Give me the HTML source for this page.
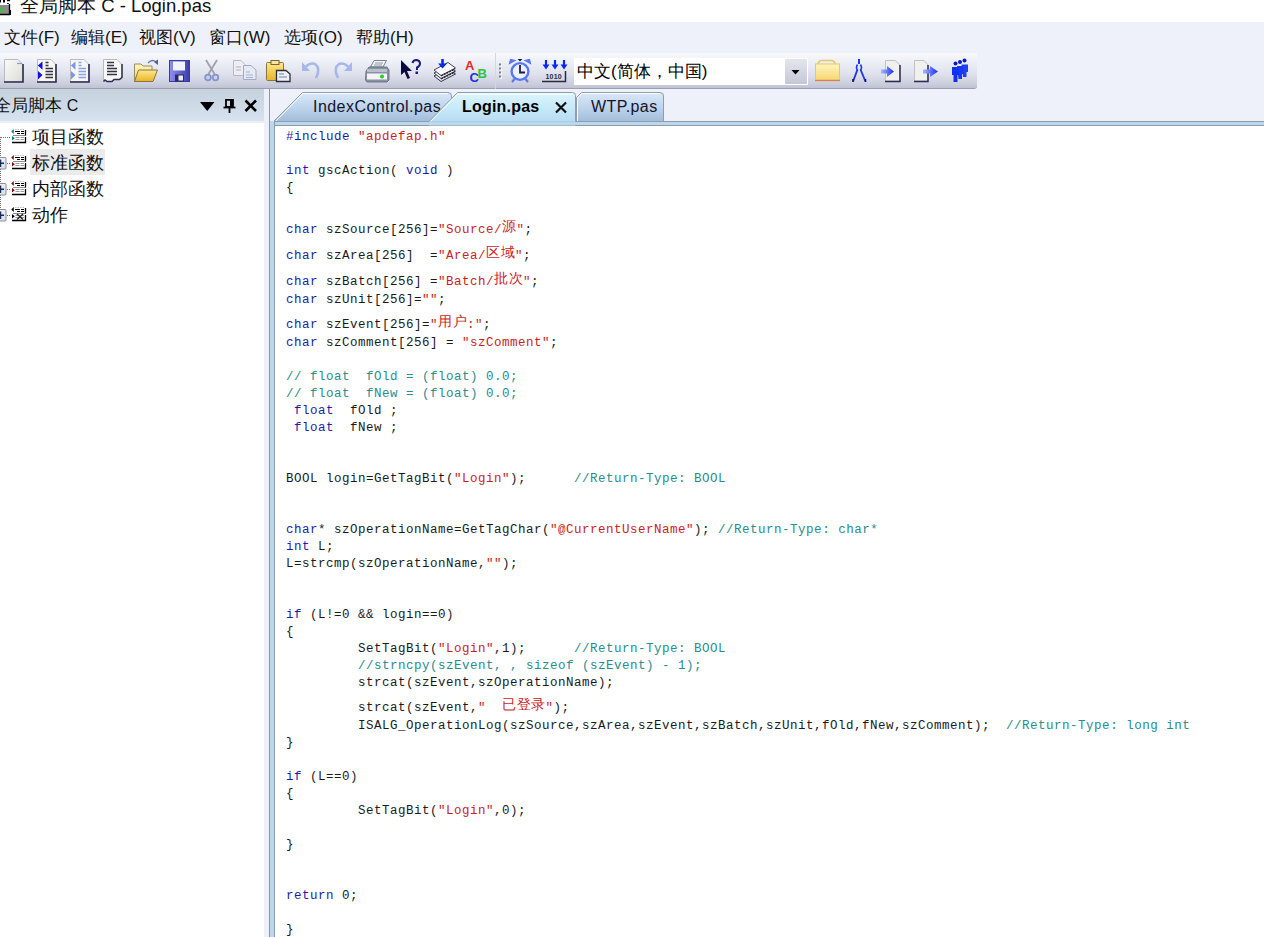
<!DOCTYPE html>
<html><head><meta charset="utf-8">
<style>
*{margin:0;padding:0;box-sizing:border-box}
html,body{width:1264px;height:937px;overflow:hidden;background:#fff;font-family:"Liberation Sans",sans-serif;position:relative}
.abs{position:absolute}
#title{left:0;top:0;width:1264px;height:22px;background:#fff}
#titletxt{left:20px;top:-4px;font-size:18.5px;color:#101010;white-space:pre;line-height:20px}
#menubar{left:0;top:22px;width:1264px;height:67px;background:#eef1f9}
.mi{position:absolute;top:28px;font-size:17px;line-height:20px;color:#111;white-space:pre}
#tb1{left:0;top:53px;width:495px;height:36px;background:linear-gradient(#f8f9fd 0%,#eef0f7 25%,#dfe1ec 60%,#cbcedd 88%,#bfc2d3 100%);border-bottom:1px solid #9c9fb0}
#tb2{left:495px;top:53px;width:482px;border-left:1px solid #d4d6e0;height:36px;background:linear-gradient(#f8f9fd 0%,#eef0f7 25%,#dfe1ec 60%,#cbcedd 88%,#bfc2d3 100%);border-bottom:1px solid #9c9fb0;border-radius:0 0 3px 0}
#hline{left:977px;top:89px;width:287px;height:1px;background:#9c9fb0}
#lefthdr{left:0;top:89px;width:265px;height:32px;background:linear-gradient(#c4d2de,#d7e3ee)}
#lefthdrline{left:0;top:121px;width:265px;height:2px;background:#eaeff6}
#tree{left:0;top:123px;width:264px;height:814px;background:#fff}
#split{left:264px;top:89px;width:5px;height:848px;background:#eef0f9}
#tabstrip{left:269px;top:89px;width:995px;height:33px;background:#eef0fa}
#vline{left:269px;top:89px;width:1px;height:848px;background:#8c96a0}
#band{left:270px;top:121px;width:994px;height:5px;background:#b9d7ee;border-top:1px solid #8e9ba6;border-bottom:1px solid #8e9ba6}
#bandl{left:270px;top:121px;width:5px;height:816px;background:#b9d7ee;border-right:1px solid #8e9ba6}
#code{left:275px;top:126px;width:989px;height:811px;background:#fff}
.ln{position:absolute;font-family:"Liberation Mono",monospace;font-size:12.5px;letter-spacing:0.5px;line-height:17px;white-space:pre;color:#1a1a1a}
.ln i{font-style:normal}
.k{color:#1c1ca0}
.s{color:#cc1c1c}
.c{color:#2a8c8c}
.z{font-weight:normal;font-size:13.5px;letter-spacing:0.5px;font-family:"Liberation Sans",sans-serif;position:relative;top:-2px}
.tabtxt{position:absolute;font-size:16px;line-height:20px;white-space:pre;color:#141428}
.tree{position:absolute;font-size:18px;line-height:20px;white-space:pre;color:#111}
</style></head><body>
<div id="title" class="abs"></div>
<svg class="abs" style="left:0;top:0" width="14" height="18" viewBox="0 0 14 18"><rect x="0" y="4" width="9" height="1" fill="#fff"/><rect x="0" y="5" width="9" height="9" fill="#8c8c8c"/><circle cx="1" cy="10" r="2.2" fill="#40c040"/><path d="M9.5 4 V14.5 H0" fill="none" stroke="#000" stroke-width="1.3"/><rect x="9.5" y="10" width="1.5" height="5" fill="#000"/><rect x="0" y="0" width="1" height="2.5" fill="#000"/><rect x="3" y="0" width="2" height="2.5" fill="#000"/><rect x="7" y="0" width="3" height="1.2" fill="#000"/><rect x="7" y="3" width="2" height="1" fill="#333"/></svg>
<div id="titletxt" class="abs">全局脚本 C - Login.pas</div>
<div id="menubar" class="abs"></div>
<div class="mi" style="left:4px">文件(F)</div>
<div class="mi" style="left:71px">编辑(E)</div>
<div class="mi" style="left:139px">视图(V)</div>
<div class="mi" style="left:209px">窗口(W)</div>
<div class="mi" style="left:284px">选项(O)</div>
<div class="mi" style="left:356px">帮助(H)</div>
<div id="tb1" class="abs"></div>
<div id="tb2" class="abs"></div>
<div id="hline" class="abs"></div>
<svg class="abs" style="left:0;top:53px" width="980" height="36" viewBox="0 53 980 36">
<defs>
<linearGradient id="pg" x1="0" y1="0" x2="1" y2="1"><stop offset="0" stop-color="#fbfbfa"/><stop offset="1" stop-color="#dcdcd6"/></linearGradient>
<linearGradient id="fy" x1="0" y1="0" x2="0" y2="1"><stop offset="0" stop-color="#fbe98a"/><stop offset="1" stop-color="#e9b42a"/></linearGradient>
<linearGradient id="fl" x1="0" y1="0" x2="0" y2="1"><stop offset="0" stop-color="#fff4c0"/><stop offset="1" stop-color="#f5d870"/></linearGradient>
<linearGradient id="sv" x1="0" y1="0" x2="1" y2="0"><stop offset="0" stop-color="#9090f0"/><stop offset="1" stop-color="#3c3cb0"/></linearGradient>
<linearGradient id="ddg" x1="0" y1="0" x2="0" y2="1"><stop offset="0" stop-color="#e4e6ee"/><stop offset="1" stop-color="#c4c8d6"/></linearGradient>
<linearGradient id="ar" x1="0" y1="0" x2="1" y2="0"><stop offset="0" stop-color="#a8b8ff"/><stop offset="1" stop-color="#1830f0"/></linearGradient>
</defs>
<!-- 1 new -->
<path d="M4.5 59.5 H18 L23 64.5 V81.5 H4.5 Z" fill="url(#pg)" stroke="#b9b9c2" stroke-width="1"/>
<path d="M23 64 V82 H4" fill="none" stroke="#2c2c52" stroke-width="1.6"/>
<path d="M17 63.5 H22" stroke="#8a9ce0" stroke-width="1.2"/>
<!-- 2 doc arrows -->
<path d="M37.5 59.5 H51 L56 64.5 V81.5 H37.5 Z" fill="#f6f7f2" stroke="#b9b9c2" stroke-width="1"/>
<path d="M56 64 V82 H37" fill="none" stroke="#2c2c52" stroke-width="1.6"/>
<path d="M37.8 65.4 L42.5 61.6 V69.7 Z M38 71 V79.5 L42.5 75 Z" fill="#1010e0"/>
<path d="M45.5 62.6 H48.5 M45.5 65.6 H48.5 M45.5 68.6 H53 M45.5 71.6 H53 M45.5 74.6 H53 M45.5 77.6 H53" stroke="#33334a" stroke-width="1.5"/>
<!-- 3 doc arrows light -->
<path d="M70.5 59.5 H84 L89 64.5 V81.5 H70.5 Z" fill="#f6f7f2" stroke="#b9b9c2" stroke-width="1"/>
<path d="M89 64 V82 H70" fill="none" stroke="#2c2c52" stroke-width="1.6"/>
<path d="M70.8 65.4 L75.5 61.6 V69.7 Z M71 71 V79.5 L75.5 75 Z" fill="#7d95ec"/>
<path d="M78.5 62.6 H81.5 M78.5 65.6 H81.5 M78.5 68.6 H86 M78.5 71.6 H86 M78.5 74.6 H86 M78.5 77.6 H86" stroke="#8aa2e6" stroke-width="1.5"/>
<!-- 4 doc lines torn -->
<path d="M103.5 59.5 H117 L122 64.5 V77 L119 79.5 H114 L112 81.5 H107 L105 80 L103.5 81.5 Z" fill="#f8f8f6" stroke="#b9b9c2" stroke-width="1"/>
<path d="M122 64 V77.5 L119.5 79.5 H114 L112 81.5 H107 L105 80 L103.5 81.5" fill="none" stroke="#2c2c52" stroke-width="1.5"/>
<path d="M107 62.6 H114 M107 65.6 H114 M107 68.6 H117 M107 71.6 H117 M107 74.6 H117" stroke="#33334a" stroke-width="1.5"/>
<!-- 5 open folder -->
<path d="M134.5 81.5 V64 H141 L143 66 H152 V70" fill="url(#fl)" stroke="#9a8a60" stroke-width="1"/>
<path d="M134.5 81.5 L138.5 70 H157.5 L153 81.5 Z" fill="url(#fy)" stroke="#8a7440" stroke-width="1"/>
<path d="M148 63 Q152 58.5 156 62" fill="none" stroke="#6878a0" stroke-width="1.3"/>
<path d="M154 62 L158 59.5 V65 Z" fill="#506090"/>
<!-- 6 save -->
<rect x="169.5" y="60.5" width="20" height="21" fill="url(#sv)" stroke="#3a3aa0" stroke-width="1"/>
<rect x="173" y="61.5" width="12" height="9" fill="#f0f4ff"/>
<rect x="175" y="74.5" width="9" height="7" fill="#2a2a60"/>
<rect x="178.5" y="75.5" width="4.5" height="5" fill="#e8ecf8"/>
<!-- 7 scissors -->
<path d="M206 60 L214.5 74 M217 60 L208.5 74" stroke="#a0a0ac" stroke-width="1.8"/>
<circle cx="208" cy="77.5" r="2.8" fill="#c8d0ec" stroke="#8494cc" stroke-width="1.8"/>
<circle cx="215.5" cy="77.5" r="2.8" fill="#c8d0ec" stroke="#8494cc" stroke-width="1.8"/>
<!-- 8 copy -->
<path d="M233.5 60.5 H241 L245 64.5 V75.5 H233.5 Z" fill="#eeeef2" stroke="#b8b8c4" stroke-width="1"/>
<path d="M243.5 65.5 H251 L256 70 V79.5 H243.5 Z" fill="#e6eaf6" stroke="#a0a8c8" stroke-width="1"/>
<path d="M236 67 H241 M236 70 H241 M246 72 H250 M246 75 H253 M246 77.5 H253" stroke="#a8b0c8" stroke-width="1"/>
<!-- 9 paste -->
<rect x="266.5" y="62.5" width="17" height="18" rx="1" fill="url(#fy)" stroke="#8a7440" stroke-width="1"/>
<rect x="271" y="60.5" width="8" height="4" fill="#f6e6a0" stroke="#7a6430" stroke-width="1"/>
<path d="M276.5 70.5 H286 L290 74 V81.5 H276.5 Z" fill="#eef2f8" stroke="#2c2c40" stroke-width="1.3"/>
<path d="M279 74 H284 M279 77 H287" stroke="#7080a0" stroke-width="1"/>
<!-- 10 undo -->
<path d="M304 69 Q309 62 315 64 Q321 68 316 78" fill="none" stroke="#a6b8ea" stroke-width="2.6"/>
<path d="M302 62 V71 H310 Z" fill="#a6b8ea"/>
<!-- 11 redo -->
<path d="M350 69 Q345 62 339 64 Q333 68 338 78" fill="none" stroke="#a6b8ea" stroke-width="2.6"/>
<path d="M352 62 V71 H344 Z" fill="#a6b8ea"/>
<!-- 12 print -->
<path d="M370.5 67 L374 60.5 H386.5 L383 67 Z" fill="#f4f6f8" stroke="#7a8090" stroke-width="1"/>
<path d="M375 63 H383 M374 65 H382" stroke="#8088a0" stroke-width="0.9"/>
<path d="M366 71 L369 67 H387 L389 70 V80 L387 82 H367 L365.5 80 Z" fill="#8a92a6" stroke="#606878" stroke-width="0.8"/>
<rect x="367" y="69" width="20" height="3" fill="#b8c0cc"/>
<rect x="367" y="73.5" width="20" height="6" fill="#f2f4f6"/>
<circle cx="382" cy="76.5" r="2" fill="#20d020"/>
<!-- 13 help -->
<path d="M401 60 L401 75 L404.5 72 L407.5 79 L410 78 L407 71 L412 71 Z" fill="#0a0a40"/>
<path d="M412.5 63 Q413 60 416.5 60 Q420 60.5 420 63.5 Q420 66 417 67.5 V70" fill="none" stroke="#1a1a80" stroke-width="2"/>
<rect x="415.5" y="71.5" width="2.5" height="2.5" fill="#1a1a80"/>
<!-- 14 stack -->
<path d="M434 76 L441 81.5 L455.5 74 L448 68.5 Z" fill="#e8e8ee" stroke="#34344a" stroke-width="1"/>
<path d="M434 73 L441 78.5 L455.5 71 L448 65.5 Z" fill="#f0f0f4" stroke="#34344a" stroke-width="1"/>
<path d="M434 70 L441 75.5 L455.5 68 L448 62.5 Z" fill="#fafafc" stroke="#44445a" stroke-width="1"/>
<path d="M441 76 L455 69 M441 79 L455 72" stroke="#20202e" stroke-width="1.3" stroke-dasharray="2.2 0.8"/>
<path d="M442.5 59 V64.5" stroke="#0a28f0" stroke-width="2.6"/>
<path d="M438 63.5 H447 L442.5 68.5 Z" fill="#0a28f0"/>
<!-- 15 ABC -->
<text x="465" y="69.5" font-family="Liberation Sans" font-weight="bold" font-size="13" fill="#e82828">A</text>
<text x="469.5" y="81.5" font-family="Liberation Sans" font-weight="bold" font-size="13" fill="#2030e0">C</text>
<text x="477.5" y="77.5" font-family="Liberation Sans" font-weight="bold" font-size="13" fill="#30c040">B</text>
<!-- grip -->
<g fill="#ffffff"><rect x="500" y="64.5" width="2" height="2"/><rect x="500" y="68.5" width="2" height="2"/><rect x="500" y="72.5" width="2" height="2"/><rect x="500" y="76.5" width="2" height="2"/></g>
<g fill="#7a7c88"><rect x="499" y="63.5" width="2" height="2"/><rect x="499" y="67.5" width="2" height="2"/><rect x="499" y="71.5" width="2" height="2"/><rect x="499" y="75.5" width="2" height="2"/></g>
<!-- 16 alarm -->
<path d="M509.5 63.5 L510.5 59.5 L515 60.5 Z M530.5 63.5 L529.5 59.5 L525 60.5 Z" fill="#5a78f0" stroke="#5a78f0" stroke-width="1.2"/>
<circle cx="520" cy="71.5" r="8.4" fill="#eef2fe" stroke="#5a78f0" stroke-width="2.4"/>
<path d="M517.5 59 H522.5 L520 61.5 Z" fill="#1a1a40"/>
<path d="M512 82 L514.5 79 M528 82 L525.5 79" stroke="#5a78f0" stroke-width="2.2"/>
<path d="M520 65 V72.5 H525" fill="none" stroke="#1a1a50" stroke-width="1.8"/>
<!-- 17 1010 -->
<g fill="#0a28f0"><path d="M546 60 V66" stroke="#0a28f0" stroke-width="2.2"/><path d="M542.5 64.5 H549.5 L546 69.5 Z"/><path d="M555 60 V66" stroke="#0a28f0" stroke-width="2.2"/><path d="M551.5 64.5 H558.5 L555 69.5 Z"/><path d="M564 60 V66" stroke="#0a28f0" stroke-width="2.2"/><path d="M560.5 64.5 H567.5 L564 69.5 Z"/></g>
<text x="545.5" y="78.5" font-family="Liberation Sans" font-weight="bold" font-size="7" fill="#2a2a40" letter-spacing="0.2">1010</text>
<path d="M542 81.5 H565.5 V71" fill="none" stroke="#2a2a40" stroke-width="1.5"/>
<!-- dropdown -->
<rect x="574" y="58" width="234" height="27" fill="#fff"/>
<rect x="785" y="59" width="22" height="25" fill="url(#ddg)"/>
<path d="M791.5 70 H799.5 L795.5 74.5 Z" fill="#000"/>
<!-- 18 folder closed -->
<path d="M818 65 Q818 60.5 822 60.5 H831 Q835 60.5 835 65" fill="none" stroke="#e8c860" stroke-width="1.5"/>
<rect x="815.5" y="64" width="24" height="16" fill="url(#fl)" stroke="#e8c868" stroke-width="1"/>
<path d="M815 80.5 H840" stroke="#e08050" stroke-width="1.3"/>
<!-- 19 compass -->
<path d="M859 59 V64" stroke="#2036e8" stroke-width="2"/>
<path d="M857.5 64.5 Q855.5 68 857.5 70 M860.5 64.5 Q862.5 68 860.5 70" fill="none" stroke="#2036e8" stroke-width="1.6"/>
<path d="M857.5 69.5 L853 81.5 M860.5 69.5 L865.5 81.5" fill="none" stroke="#2036e8" stroke-width="1.9"/>
<path d="M853 79 V82 M865.5 79 V82" stroke="#101060" stroke-width="1.5"/>
<!-- 20 import -->
<path d="M885.5 60.5 H895 L900 65 V81 H885.5 Z" fill="#f0f0ec" stroke="#c0c0c8" stroke-width="1"/>
<path d="M900 65 V81.5 H885" fill="none" stroke="#2c2c52" stroke-width="1.5"/>
<path d="M881 69.5 H887 V66 L894 71.5 L887 77 V73.5 H881 Z" fill="url(#ar)"/>
<!-- 21 export -->
<path d="M914.5 60.5 H924 L928 65 V81 H914.5 Z" fill="#f0f0ec" stroke="#c0c0c8" stroke-width="1"/>
<path d="M928 65 V81.5 H914" fill="none" stroke="#2c2c52" stroke-width="1.5"/>
<path d="M923 69.5 H930 V66 L938 71.5 L930 77 V73.5 H923 Z" fill="url(#ar)"/>
<!-- 22 people -->
<g fill="#0818c8"><circle cx="964.5" cy="60.5" r="2"/><circle cx="960" cy="62" r="2"/><circle cx="955.5" cy="63.5" r="2"/></g>
<path d="M961.5 64.5 H968 V72 H966.5 V77 H963 Z" fill="#2040f0"/>
<path d="M957 66 H963.5 V74 H962 V79 H958.5 Z" fill="#1838f0"/>
<path d="M952 67 H959 V75 H957.5 V82 H953.5 V75 H952 Z" fill="#1030f0"/>
</svg>

<div id="lefthdr" class="abs"></div>
<div id="lefthdrline" class="abs"></div>
<div class="tree" style="left:-6px;top:96px;font-size:17px">全局脚本 <span style="font-size:16px">C</span></div>
<div class="abs" style="left:577px;top:62px;font-size:17px;line-height:20px;color:#000;white-space:pre;z-index:5">中文(简体，中国)</div>
<div id="tree" class="abs"></div>
<div id="split" class="abs"></div>
<div id="vline" class="abs"></div>
<svg class="abs" style="left:269px;top:89px" width="995" height="37" viewBox="269 89 995 37">
<defs>
<linearGradient id="ti" x1="0" y1="0" x2="0" y2="1"><stop offset="0" stop-color="#d9e8f7"/><stop offset="0.5" stop-color="#bed5ee"/><stop offset="1" stop-color="#a2bcda"/></linearGradient>
<linearGradient id="ta" x1="0" y1="0" x2="0" y2="1"><stop offset="0" stop-color="#dcf4fd"/><stop offset="0.5" stop-color="#c8eaf9"/><stop offset="1" stop-color="#b6dcf2"/></linearGradient>
</defs>
<rect x="269" y="89" width="995" height="37" fill="#eef0fa"/>
<rect x="269" y="89" width="1" height="37" fill="#8c96a0"/>
<!-- band -->
<rect x="270" y="121" width="994" height="5" fill="#b9d7ee"/>
<rect x="270" y="121" width="994" height="1" fill="#8e9ba6"/>
<rect x="274" y="125" width="990" height="1" fill="#8e9ba6"/>
<rect x="274" y="125" width="1" height="1" fill="#8e9ba6"/>
<!-- tab1 -->
<path d="M273.5 121.5 L302.5 92.5 H448 Q451.5 92.5 451.5 96 V121.5 Z" fill="url(#ti)" stroke="#909eac" stroke-width="1"/>
<path d="M276 121 L303 93.5 H448" fill="none" stroke="#ffffff" stroke-width="1" opacity="0.9"/>
<text x="313" y="112" font-family="Liberation Sans" font-size="16" letter-spacing="0.45" fill="#141428">IndexControl.pas</text>
<!-- tab3 -->
<path d="M576.5 121.5 V97.5 L581.5 92.5 H660 Q663.5 92.5 663.5 96 V121.5 Z" fill="url(#ti)" stroke="#909eac" stroke-width="1"/>
<path d="M577.5 121 V98 L582 93.5 H660" fill="none" stroke="#ffffff" stroke-width="1" opacity="0.9"/>
<text x="591" y="112" font-family="Liberation Sans" font-size="16" letter-spacing="0.4" fill="#141428">WTP.pas</text>
<!-- active -->
<path d="M428.5 122 L457.5 92.5 H572.5 Q575.5 92.5 575.5 95.5 V122 Z" fill="url(#ta)" stroke="#909eac" stroke-width="1"/>
<path d="M430.5 121.5 L458 94 H572" fill="none" stroke="#ffffff" stroke-width="1"/>
<rect x="429" y="121.5" width="146.5" height="4" fill="#b9d7ee"/>
<text x="462" y="112" font-family="Liberation Sans" font-weight="bold" font-size="16" letter-spacing="0.2" fill="#000">Login.pas</text>
<!-- close x -->
<path d="M556 102.5 L566 112.5 M566 102.5 L556 112.5" stroke="#111" stroke-width="2.2"/>
</svg>

<div id="bandl" class="abs"></div>
<div id="code" class="abs"></div>
<svg class="abs" style="left:0;top:89px" width="265" height="140" viewBox="0 89 265 140">
<defs>

<linearGradient id="bx" x1="0" y1="0" x2="1" y2="1"><stop offset="0" stop-color="#ffffff"/><stop offset="1" stop-color="#d4d8e0"/></linearGradient>
</defs>
<!-- header controls -->
<path d="M200 102 H214.5 L207.25 111 Z" fill="#000"/>
<path d="M226 99.8 H233 V107 H226 Z" fill="none" stroke="#000" stroke-width="1.8"/>
<rect x="230" y="100" width="3" height="7" fill="#000"/>
<path d="M223.5 107.5 H235.5" stroke="#000" stroke-width="1.8"/>
<path d="M229.5 108 V113" stroke="#000" stroke-width="1.8"/>
<path d="M245.5 100.5 L256 111 M256 100.5 L245.5 111" stroke="#000" stroke-width="2.6"/>
<!-- selection -->
<rect x="30" y="149" width="75" height="26" fill="#ebebeb"/>
<!-- dotted lines -->
<g stroke="#6a6a6a" stroke-width="1" stroke-dasharray="1 1">
<path d="M0.5 137 V216"/>
<path d="M1 137.5 H11"/>
<path d="M7 163.5 H11"/>
<path d="M7 189.5 H11"/>
<path d="M7 215.5 H11"/>
</g>
<!-- expand boxes -->
<g>
<rect x="-5.5" y="157.5" width="11.5" height="11.5" rx="1" fill="url(#bx)" stroke="#8a9098"/>
<rect x="-5.5" y="183.5" width="11.5" height="11.5" rx="1" fill="url(#bx)" stroke="#8a9098"/>
<rect x="-5.5" y="209.5" width="11.5" height="11.5" rx="1" fill="url(#bx)" stroke="#8a9098"/>
<path d="M-3 163.2 H4 M0.5 159.5 V167 M-3 189.2 H4 M0.5 185.5 V193 M-3 215.2 H4 M0.5 211.5 V219" stroke="#1a2a60" stroke-width="1.5"/>
</g>
<!-- tree icons -->
<g transform="translate(0 129)">
<path d="M13 6.5 H25.5 V1" fill="none" stroke="#909090" stroke-width="1"/>
<path d="M25.5 1 V6.5" stroke="#000" stroke-width="1.3"/>
<path d="M15 2.5 H20 M21 2.5 H24 M17 4.5 H20 M21 4.5 H24" stroke="#000" stroke-width="1.1"/>
<path d="M15 0.5 H24" stroke="#b0b0b0" stroke-width="0.8" stroke-dasharray="1.5 1"/>
<path d="M15.5 8.5 H24 M15.5 10.5 H24" stroke="#9a9a9a" stroke-width="1" stroke-dasharray="4 1"/>
<path d="M12 13.5 H25.5 V8" fill="none" stroke="#000" stroke-width="1.3"/>
</g>
<path d="M11.2 131.5 L13.8 129 V134 Z M12 136 V140.5 L14.8 138.2 Z" fill="#1a7878"/>
<g transform="translate(0 155)">
<path d="M13 6.5 H25.5 V1" fill="none" stroke="#909090" stroke-width="1"/>
<path d="M25.5 1 V6.5" stroke="#000" stroke-width="1.3"/>
<path d="M15 2.5 H20 M21 2.5 H24 M17 4.5 H20 M21 4.5 H24" stroke="#000" stroke-width="1.1"/>
<path d="M15 0.5 H24" stroke="#b0b0b0" stroke-width="0.8" stroke-dasharray="1.5 1"/>
<path d="M15.5 8.5 H24 M15.5 10.5 H24" stroke="#9a9a9a" stroke-width="1" stroke-dasharray="4 1"/>
<path d="M12 13.5 H25.5 V8" fill="none" stroke="#000" stroke-width="1.3"/>
</g>
<path d="M11.2 157.5 L13.8 155 V160 Z M12 162 V166.5 L14.8 164.2 Z" fill="#7a0a0a"/>
<g transform="translate(0 181)">
<path d="M13 6.5 H25.5 V1" fill="none" stroke="#909090" stroke-width="1"/>
<path d="M25.5 1 V6.5" stroke="#000" stroke-width="1.3"/>
<path d="M15 2.5 H20 M21 2.5 H24 M17 4.5 H20 M21 4.5 H24" stroke="#000" stroke-width="1.1"/>
<path d="M15 0.5 H24" stroke="#b0b0b0" stroke-width="0.8" stroke-dasharray="1.5 1"/>
<path d="M15.5 8.5 H24 M15.5 10.5 H24" stroke="#9a9a9a" stroke-width="1" stroke-dasharray="4 1"/>
<path d="M12 13.5 H25.5 V8" fill="none" stroke="#000" stroke-width="1.3"/>
</g>
<path d="M11.2 183.5 L13.8 181 V186 Z M12 188 V192.5 L14.8 190.2 Z" fill="#7a0a0a"/>
<g transform="translate(0 207)">
<path d="M13 6.5 H25.5 V1" fill="none" stroke="#909090" stroke-width="1"/>
<path d="M25.5 1 V6.5" stroke="#000" stroke-width="1.3"/>
<path d="M15 2.5 H20 M21 2.5 H24 M17 4.5 H20 M21 4.5 H24" stroke="#000" stroke-width="1.1"/>
<path d="M15 0.5 H24" stroke="#b0b0b0" stroke-width="0.8" stroke-dasharray="1.5 1"/>
<path d="M15.5 8.5 H24 M15.5 10.5 H24" stroke="#9a9a9a" stroke-width="1" stroke-dasharray="4 1"/>
<path d="M12 13.5 H25.5 V8" fill="none" stroke="#000" stroke-width="1.3"/>
</g>
<path d="M11.2 209.5 L13.8 207 V212 Z M12 214 V218.5 L14.8 216.2 Z" fill="#000"/>
<path d="M17 214 L23 219.5 M23 214 L17 219.5" stroke="#202020" stroke-width="1.3"/>
</svg>

<div class="tree" style="left:32px;top:127px">项目函数</div>
<div class="tree" style="left:32px;top:153px">标准函数</div>
<div class="tree" style="left:32px;top:179px">内部函数</div>
<div class="tree" style="left:32px;top:205px">动作</div>
<div class="ln" style="top:129px;left:286px"><i class="k">#include</i> <i class="s">&quot;apdefap.h&quot;</i></div>
<div class="ln" style="top:163px;left:286px"><i class="k">int</i> gscAction( <i class="k">void</i> )</div>
<div class="ln" style="top:180px;left:286px">{</div>
<div class="ln" style="top:220px;left:286px"><i class="k">char</i> szSource[256]=<i class="s">&quot;Source/<b class="z">源</b>&quot;</i>;</div>
<div class="ln" style="top:246px;left:286px"><i class="k">char</i> szArea[256]  =<i class="s">&quot;Area/<b class="z">区</b><b class="z">域</b>&quot;</i>;</div>
<div class="ln" style="top:272px;left:286px"><i class="k">char</i> szBatch[256] =<i class="s">&quot;Batch/<b class="z">批</b><b class="z">次</b>&quot;</i>;</div>
<div class="ln" style="top:292px;left:286px"><i class="k">char</i> szUnit[256]=<i class="s">&quot;&quot;</i>;</div>
<div class="ln" style="top:315px;left:286px"><i class="k">char</i> szEvent[256]=<i class="s">&quot;<b class="z">用</b><b class="z">户</b>:&quot;</i>;</div>
<div class="ln" style="top:335px;left:286px"><i class="k">char</i> szComment[256] = <i class="s">&quot;szComment&quot;</i>;</div>
<div class="ln" style="top:369px;left:286px"><i class="c">// float  fOld = (float) 0.0;</i></div>
<div class="ln" style="top:386px;left:286px"><i class="c">// float  fNew = (float) 0.0;</i></div>
<div class="ln" style="top:403px;left:286px"> <i class="k">float</i>  fOld ;</div>
<div class="ln" style="top:420px;left:286px"> <i class="k">float</i>  fNew ;</div>
<div class="ln" style="top:471px;left:286px">BOOL login=GetTagBit(<i class="s">&quot;Login&quot;</i>);      <i class="c">//Return-Type: BOOL</i></div>
<div class="ln" style="top:522px;left:286px"><i class="k">char</i>* szOperationName=GetTagChar(<i class="s">&quot;@CurrentUserName&quot;</i>); <i class="c">//Return-Type: char*</i></div>
<div class="ln" style="top:539px;left:286px"><i class="k">int</i> L;</div>
<div class="ln" style="top:556px;left:286px">L=strcmp(szOperationName,<i class="s">&quot;&quot;</i>);</div>
<div class="ln" style="top:607px;left:286px"><i class="k">if</i> (L!=0 &amp;&amp; login==0)</div>
<div class="ln" style="top:624px;left:286px">{</div>
<div class="ln" style="top:641px;left:358px">SetTagBit(<i class="s">&quot;Login&quot;</i>,1);      <i class="c">//Return-Type: BOOL</i></div>
<div class="ln" style="top:658px;left:358px"><i class="c">//strncpy(szEvent, , sizeof (szEvent) - 1);</i></div>
<div class="ln" style="top:675px;left:358px">strcat(szEvent,szOperationName);</div>
<div class="ln" style="top:698px;left:358px">strcat(szEvent,<i class="s">&quot;  <b class="z">已</b><b class="z">登</b><b class="z">录</b>&quot;</i>);</div>
<div class="ln" style="top:718px;left:358px">ISALG_OperationLog(szSource,szArea,szEvent,szBatch,szUnit,fOld,fNew,szComment);  <i class="c">//Return-Type: long int</i></div>
<div class="ln" style="top:735px;left:286px">}</div>
<div class="ln" style="top:769px;left:286px"><i class="k">if</i> (L==0)</div>
<div class="ln" style="top:786px;left:286px">{</div>
<div class="ln" style="top:803px;left:358px">SetTagBit(<i class="s">&quot;Login&quot;</i>,0);</div>
<div class="ln" style="top:837px;left:286px">}</div>
<div class="ln" style="top:888px;left:286px"><i class="k">return</i> 0;</div>
<div class="ln" style="top:922px;left:286px">}</div>
</body></html>
